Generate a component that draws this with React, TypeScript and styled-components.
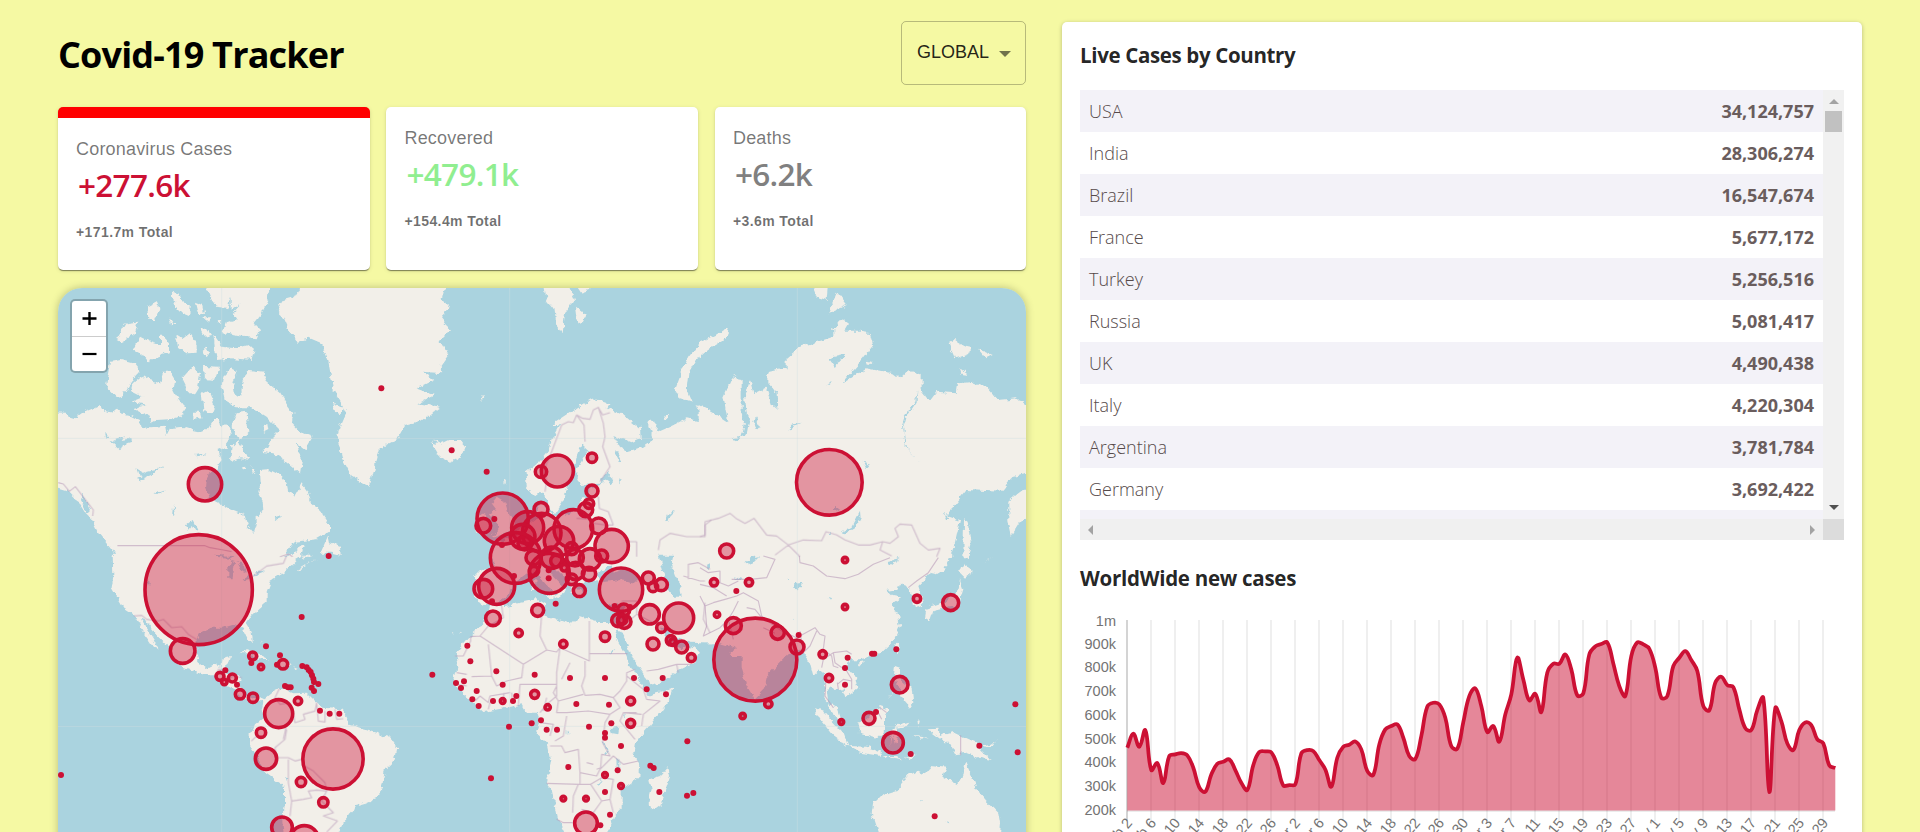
import React from "react";
import styled, { createGlobalStyle } from "styled-components";

const ui = '"Open Sans", "Noto Sans", sans-serif';
const arial = '"Liberation Sans", Arial, sans-serif';

const GlobalStyle = createGlobalStyle`
  * { box-sizing: border-box; }
  html, body { margin: 0; height: 832px; overflow: hidden; background: #f5f9a3; }
`;

const Page = styled.div`
  display: flex;
  gap: 36px;
  align-items: flex-start;
  padding: 21px 58px 0;
  height: 832px;
  overflow: hidden;
  font-family: ${ui};
`;

const Left = styled.main`
  width: 968px;
  flex: none;
`;

const Header = styled.header`
  display: flex;
  justify-content: space-between;
  align-items: flex-start;
  height: 86px;
`;

const Title = styled.h1`
  margin: 9px 0 0;
  font-size: 36px;
  line-height: 50px;
  font-weight: 700;
  letter-spacing: -0.83px;
  white-space: nowrap;
`;

const Select = styled.button`
  display: flex;
  align-items: flex-start;
  gap: 10px;
  width: 125px;
  height: 64px;
  padding: 20px 0 0 15px;
  border: 1px solid rgba(0, 0, 0, 0.25);
  border-radius: 5px;
  background: transparent;
  color: rgba(0, 0, 0, 0.87);
  font: 18px/20px ${arial};
`;

const Caret = styled.span`
  margin-top: 9px;
  border: 6px solid transparent;
  border-top-color: rgba(0, 0, 0, 0.54);
  border-bottom: 0;
`;

const Cards = styled.section`
  display: grid;
  grid-template-columns: 311.6px 311.6px 311px;
  column-gap: 16.9px;
`;

const Card = styled.article<{ $active?: boolean }>`
  height: 163px;
  padding: 21px 18px 0;
  border-top: ${(p) => (p.$active ? "11px solid red" : "0")};
  border-radius: 5px;
  background: #fff;
  box-shadow: 0 2px 1px -1px rgba(0, 0, 0, 0.3), 0 1px 1px rgba(0, 0, 0, 0.2), 0 1px 4px rgba(0, 0, 0, 0.12);
`;

const CardLabel = styled.div`
  font: 18px/20px ${arial};
  color: rgba(0, 0, 0, 0.54);
  letter-spacing: 0.19px;
`;

const CardNumber = styled.div<{ $color: string }>`
  margin-top: 4px;
  padding-left: 2px;
  font-size: 31.5px;
  line-height: 44px;
  font-weight: 600;
  letter-spacing: -0.7px;
  color: ${(p) => p.$color};
`;

const CardTotal = styled.div`
  margin-top: 16px;
  font: 700 14px/18px ${arial};
  letter-spacing: 0.4px;
  color: rgba(0, 0, 0, 0.56);
`;

const MapFrame = styled.section`
  position: relative;
  height: 600px;
  margin-top: 18px;
  border-radius: 24px;
  overflow: hidden;
  background: #aad3df;
`;

const MapShadow = styled.div`
  border-radius: 24px;
  box-shadow: 0 0 9px rgba(0, 0, 0, 0.24);
`;

const MapSvg = styled.svg`
  display: block;
  width: 968px;
  height: 600px;
`;

const ZoomControl = styled.div`
  position: absolute;
  left: 12px;
  top: 11px;
  width: 38px;
  height: 74px;
  border: 2px solid rgba(0, 0, 0, 0.22);
  border-radius: 5px;
  background-clip: padding-box;
  background-color: #fff;
`;

const ZoomButton = styled.button`
  display: flex;
  align-items: center;
  justify-content: center;
  width: 100%;
  height: 35px;
  padding: 0;
  border: 0;
  background: none;
  & + & {
    border-top: 1px solid #ccc;
  }
`;

const Panel = styled.aside`
  width: 800px;
  height: 900px;
  margin-top: 1px;
  padding: 18px;
  flex: none;
  border-radius: 5px;
  background: #fff;
  box-shadow: 0 1px 4px rgba(0, 0, 0, 0.25);
`;

const PanelHeading = styled.h3<{ $top?: number; $spacing?: number }>`
  margin: ${(p) => p.$top ?? 0}px 0 0;
  font-size: 20.5px;
  line-height: 30px;
  font-weight: 700;
  letter-spacing: ${(p) => p.$spacing ?? -0.35}px;
  color: rgba(0, 0, 0, 0.87);
`;

const TableBox = styled.div`
  display: grid;
  grid-template: 429px 21px / 743px 21px;
  margin-top: 20px;
`;

const Rows = styled.div`
  overflow: hidden;
`;

const Row = styled.div<{ $shaded: boolean }>`
  display: flex;
  justify-content: space-between;
  align-items: center;
  height: 42px;
  padding: 0 9px;
  font-size: 18px;
  letter-spacing: 0;
  color: #6a5d5d;
  background: ${(p) => (p.$shaded ? "#f3f2f8" : "#fff")};
  strong {
    font-weight: 700;
    font-size: 18px;
  }
`;

const Country = styled.span`
  font-weight: 300;
  color: #564a4a;
`;

const ScrollV = styled.div`
  display: flex;
  flex-direction: column;
  align-items: center;
  background: #f1f1f1;
`;

const ScrollH = styled.div`
  display: flex;
  align-items: center;
  justify-content: space-between;
  padding: 0 8px;
  background: #f0f0f0;
`;

const Corner = styled.div`
  background: #dcdcdc;
`;

const Thumb = styled.div`
  width: 17px;
  height: 21px;
  margin: 7px 0 auto;
  background: #c1c1c1;
`;

const Arrow = styled.i<{ $dir: "up" | "down" | "left" | "right" }>`
  border: 5px solid transparent;
  ${(p) =>
    ({
      up: "margin-top: 9px; border-top: 0; border-bottom-color: #a3a3a3;",
      down: "margin-bottom: 9px; border-bottom: 0; border-top-color: #505050;",
      left: "border-left: 0; border-right-color: #a3a3a3;",
      right: "border-right: 0; border-left-color: #a3a3a3;",
    })[p.$dir]}
`;

const ChartSvg = styled.svg`
  display: block;
  width: 764px;
  height: 240px;
  margin-top: 17px;
  text {
    font: 14.5px ${arial};
    fill: #737373;
  }
`;

const countries: [string, string][] = [
  ["USA", "34,124,757"],
  ["India", "28,306,274"],
  ["Brazil", "16,547,674"],
  ["France", "5,677,172"],
  ["Turkey", "5,256,516"],
  ["Russia", "5,081,417"],
  ["UK", "4,490,438"],
  ["Italy", "4,220,304"],
  ["Argentina", "3,781,784"],
  ["Germany", "3,692,422"],
  ["", ""],
];

type Marker = [number, number, number?, number?];

interface Tile {
  x: number;
  y: number;
  land: string;
  water?: string;
  borders?: string;
  markers: Marker[];
}

// Tile geometry is in thirds of a pixel; x and y are the tile's pixel origin.
const tiles: Tile[] = [
  {
    x: 50,
    y: 280,
    land: `M0 397L45 398 60 410 75 415 95 400 130 385 150 375 160 395 185 400 200 385 215 400 240 405 270 420 275 440 300 445 345 440 350 465 360 445 400 440 430 450 455 455 475 445 490 420 510 420 515 445 530 430 545 460 530 500 505 510 515 540 500 560 482 575 470 600 468 625 480 655 510 670 535 685 585 705 590 735 612 762 620 735 620 710 640 690 638 660 625 635 632 610 630 570 655 568 690 585 710 610 715 635 735 645 755 610 770 630 785 670 810 690 840 735 840 755 800 778 735 785 700 832L202 832 145 760 125 720 105 700 80 660 50 630 0 615Z
      M722 832L745 800 762 797 752 832ZM812 818L835 765 840 790 870 800 872 825 845 818Z
      M245 310L275 285 300 300 330 310 340 275 360 275 375 300 370 335 395 370 408 385 390 410 355 418 320 420 300 425 290 405 250 385 290 375 245 365 280 350 240 330Z
      M183 245L212 240 250 250 270 275 240 310 220 345 198 352 170 325Z
      M365 35L385 40 400 65 425 85 420 108 400 100 375 75ZM435 65L460 75 465 100 445 105ZM292 80L320 65 328 85 315 120 295 120ZM200 180L230 130 265 125 255 160 215 188ZM360 112L376 135 366 135Z
      M250 210L270 170 300 185 330 195 330 160 360 190 360 215 320 230 295 245 280 225ZM375 160L400 175 420 160 440 190 440 218 410 220 385 205ZM450 150L470 145 483 165 460 170ZM455 210L465 200 480 220 470 235ZM503 118L514 125 508 136ZM456 112L480 112 475 125Z
      M490 165L515 200 560 205 595 195 613 210 605 240 550 235 500 240Z
      M460 0L665 0 655 60 635 100 610 130 630 150 620 175 580 170 520 160 530 130 560 120 540 85 500 80 485 60Z
      M395 300L430 260 450 280 445 320 430 345 405 320ZM462 258L510 260 495 300 465 298ZM455 340L475 330 495 375 485 400 460 390ZM430 395L450 395 455 415 430 420Z
      M520 290L545 265 560 272 550 310 555 340 570 350 575 300 600 270 640 275 650 305 690 340 715 380 730 400 725 430 750 455 788 470 765 510 740 490 755 550 750 580 710 545 670 520 630 515 655 500 670 470 690 450 650 410 610 385 560 385 525 365 515 320Z
      M545 500L565 480 580 520 600 540 570 535 540 545ZM560 400L590 395 595 460 570 480 545 440ZM638 435L655 432 658 450 642 458ZM572 562L586 560 584 570ZM605 560L615 575 608 580Z
      M765 0L735 50 700 60 680 90 700 110 715 145 740 185 780 175 815 190 835 240 850 330 870 360 890 395 870 440 862 470 875 530 905 590 960 617 975 560 994 490 994 0ZM850 370L888 390 870 403 855 395Z`,
    water: `M185 485L225 465 215 480 245 475 245 488 222 495 215 512ZM258 598L290 575 315 570 340 555 310 582 270 600ZM310 640L345 627 325 642ZM408 735L428 720 445 752 435 755 425 738 415 752ZM535 85L545 50 545 90 575 70 548 100ZM370 675L374 700 366 705ZM262 565L285 580 270 588ZM165 455L178 470 170 475ZM95 640L120 690 110 700 90 660ZM430 525L470 520 440 535ZM672 712L690 705 680 720Z`,
    borders: `M24 608L40 612 58 634 76 620 130 690 128 708M202 797L465 797 480 803 520 810 545 815M690 830L715 822 728 830`,
    markers: [[465, 613, 50], [836, 828]],
  },
  {
    x: 380,
    y: 280,
    land: `M-4 0L200 0 185 60 210 80 180 110 210 150 180 180 205 225 180 260 190 280 125 275 160 300 110 325 165 345 112 370 180 380 130 420 75 435 50 480 -4 508Z
      M155 490L172 495 160 480 180 492 205 480 240 480 257 500 245 530 210 545 180 530 172 515Z
      M490 0L560 0 585 60 555 100 548 160 525 125 520 85 500 60ZM585 80L618 105 605 130 590 120ZM580 0L635 0 630 30 605 38Z
      M994 175L950 200 920 240 900 290 885 330 900 355 935 365 920 330 925 280 950 235 994 200Z
      M437 580L470 555 500 520 515 480 540 435 515 435 560 405 590 385 640 355 685 370 680 385 730 405 780 445 782 475 755 487 700 465 720 500 745 515 790 500 820 480 805 425 830 425 825 460 870 440 920 415 965 425 950 375 994 400 994 832 330 832 340 800 380 775 400 770 420 745 450 730 470 715 470 680 490 670 500 690 520 705 560 700 600 690 598 665 625 650 625 625 680 610 600 615 590 590 595 560 625 510 605 492 590 530 580 580 560 620 545 670 525 700 510 690 495 640 480 635 460 650 440 620Z
      M350 650L375 665 385 700 405 725 400 750 370 760 335 770 355 740 345 720 330 700 350 690 335 670ZM290 715L320 700 335 725 320 755 290 755ZM850 405L865 402 862 418 852 416ZM302 355L312 351 306 360ZM372 603L378 598 376 614Z`,
    water: `M678 585L700 600 695 612 680 600ZM715 590L728 600 722 610ZM660 600L685 575 690 590 665 612ZM855 725L865 700 885 692 868 710 862 728ZM710 510L725 540 718 550 706 525Z`,
    borders: `M495 635L500 600 492 570 515 515 545 435 565 425 580 428 590 405 608 415 630 418 640 390 655 382 668 405 690 398M590 405L612 435 615 485M655 382L670 430 675 470 668 500 690 560 660 605M655 650L658 685 685 695 700 735M770 785L770 830M835 810L840 780 870 760 920 770 975 770 975 735 994 720M740 785L770 785M640 730L680 735 700 735M590 715L635 718`,
    markers: [
      [4, 325], [215, 511], [320, 575], [532, 573, 48], [483, 575, 17], [636, 533, 14], [636, 633, 18], [627, 671, 14],
      [617, 689, 21], [483, 688, 21], [656, 738, 24], [368, 716, 77], [310, 737, 22], [343, 717], [580, 747, 58],
      [695, 798, 50], [443, 743, 48], [485, 758, 58], [428, 770, 37], [537, 783, 44], [575, 806, 18], [434, 790, 20], [366, 795],
    ],
  },
  {
    x: 700,
    y: 280,
    land: `M-4 190L50 165 80 145 90 158 70 180 10 215 -4 235Z
      M-4 375L40 400 85 430 70 350 95 295 125 300 125 400 135 430 125 470 95 475 105 482 140 465 150 415 140 400 135 350 150 300 160 340 200 320 220 380 232 390 230 340 205 310 205 275 260 265 260 235 300 200 370 180 400 170 400 150 425 115 445 130 430 155 480 155 510 160 520 195 490 235 420 315 500 265 580 280 600 295 625 270 665 285 665 330 690 362 710 335 770 340 775 310 820 305 860 320 895 360 950 355 1010 395 1010 575 940 590 905 635 800 630 760 680 735 705 780 720 765 790 750 832 -4 832Z
      M1010 600L955 640 925 665 925 720 935 765 960 725 1010 700ZM792 718L803 725 812 790 800 832 790 832Z
      M330 0L385 0 380 60 350 50ZM410 35L440 75 385 100ZM745 190L765 180 790 195 815 200 815 215 795 225 765 235ZM830 205L875 225 855 235ZM780 265L805 285 785 282ZM100 285L110 288 102 292ZM500 242L515 245 505 255Z`,
    water: `M480 692L482 715 465 745 440 760 425 758 455 740ZM385 235L430 225 438 230 410 245 405 262ZM165 415L182 445 172 448 160 425ZM268 435L305 428 280 440 266 452ZM488 545L508 555 498 568ZM390 758L396 765 390 775ZM728 705L748 712 740 722ZM400 305L385 318 379 315ZM405 680L418 690 405 695ZM652 330L650 365 620 410 612 440 622 510 660 545 618 505 609 440 617 405 646 362ZM210 205L216 210 212 216ZM345 142L354 147 347 151Z`,
    borders: `M0 770L15 765 15 725 55 715 90 700 108 715 135 730 162 715 200 765 230 768 265 795 300 830M225 825L265 795 310 780 365 782 378 755 410 765 435 780 475 795 510 795 548 785 570 790 595 770 585 745 600 732 635 735 660 790 685 810 720 805 710 830M548 785L540 810 575 828`,
    markers: [[388, 607, 98.5], [80, 813, 21]],
  },
  {
    x: 50,
    y: 556,
    land: `M188 -4L190 60 185 95 205 130 220 155 250 175 265 200 285 235 300 255 320 285 325 280 310 250 295 225 280 200 275 188 290 195 320 235 350 265 365 300 400 335 440 350 475 358 500 358 510 375 525 385 545 395 560 410 575 425 590 430 610 440 625 432 640 440 635 460 640 485 615 505 600 540 600 570 620 600 645 650 680 675 705 690 705 740 700 790 705 850 855 850 880 800 910 765 915 750 950 740 975 730 994 705 994 535 960 525 930 515 895 505 890 480 870 460 820 455 790 430 770 410 730 412 690 395 670 405 640 430 625 422 595 425 575 410 570 380 578 370 560 362 520 350 510 345 515 305 543 300 535 325 520 335 490 325 470 335 445 315 438 285 440 250 450 230 480 215 520 215 555 205 575 215 595 255 608 255 605 225 590 200 605 180 650 140 650 110 665 70 700 50 725 30 745 10 790 -4Z
      M740 42L775 20 802 12 770 25 745 46ZM568 292L590 285 630 298 660 312 635 312 600 292ZM675 322L700 312 722 325 700 335ZM732 332L746 332 740 336ZM620 330L645 335 635 340ZM628 252L635 265 632 262Z`,
    water: `M490 -4L550 0 540 8 505 6ZM535 70L535 35 545 12 555 15 548 70ZM560 15L585 30 590 50 575 45ZM578 68L600 55 608 65 585 72ZM608 52L640 40 640 47 615 58ZM290 72L300 80 294 86ZM738 12L765 -4 745 16ZM705 660L715 665 712 678Z`,
    borders: `M252 180L275 178 290 190 325 195 340 190 365 215 395 212 415 235 440 250M590 70L610 60 650 30 700 22 710 -2M498 358L505 340 520 340M530 372L550 360 575 365M688 398L675 425 690 445 720 440 730 470 735 500 765 490 760 475 795 465 800 440M800 440L805 495 825 498 825 465M855 460L860 490 880 488M710 520L705 550 675 575 680 605 715 605 735 615 755 610M604 555L620 540M715 610L715 680 725 735 760 730 785 725 775 705 800 702 830 705 825 680 790 645 755 625M725 735L720 780M830 705L815 735 850 770 820 780 862 795 830 828M700 550L708 515`,
    markers: [
      [446, 101, 161, 165], [398, 285, 37], [510, 361, 12], [523, 378, 8], [526, 343], [547, 366, 12], [561, 386],
      [570, 415, 14], [609, 425, 14], [608, 300, 12], [604, 321], [633, 333, 8], [648, 271], [690, 298], [681, 326],
      [699, 325, 14], [755, 183], [744, 435, 11], [686, 473, 42], [633, 530, 14], [648, 608, 32], [753, 678, 14],
      [820, 739, 14], [849, 609, 90.5], [696, 814, 31], [763, 852, 43], [810, 464], [839, 473], [868, 473], [33, 657],
      [757, 330], [770, 334], [776, 342], [782, 348], [786, 358], [790, 368], [792, 378], [785, 395], [792, 405],
      [805, 384], [705, 390], [714, 394], [722, 394],
    ],
  },
  {
    x: 380,
    y: 556,
    land: `M330 -4L345 20 340 40 300 45 285 60 285 130 315 145 350 140 390 115 400 80 430 60 450 45 475 55 500 85 530 110 525 125 535 120 555 105 550 90 520 60 500 30 515 25 540 50 565 75 575 110 600 130 605 110 590 95 620 75 650 70 660 90 660 130 690 145 735 145 735 170 720 200 714 215 740 260 760 310 795 360 805 388 840 380 880 350 930 325 960 290 945 275 925 265 905 280 885 270 865 250 840 215 850 215 885 245 930 260 994 262 994 -4Z
      M330 148L375 150 470 130 495 145 480 175 520 185 575 205 600 180 650 195 700 195 715 215 705 240 740 300 745 320 765 355 800 405 800 420 880 398 870 430 840 470 790 530 765 560 760 590 778 620 775 665 725 700 725 755 700 780 690 810 665 850 565 850 530 780 515 700 500 680 515 620 505 570 470 530 480 500 470 470 440 470 425 445 380 455 310 468 270 430 235 400 220 370 235 310 228 290 270 240 300 215 325 165Z
      M865 630L870 660 840 750 820 765 805 740 815 700 808 670 840 660ZM-4 538L30 545 52 575 45 610 15 640 5 700 -4 712ZM455 75L467 72 465 100 455 98ZM500 118L528 115 522 130ZM215 228L222 232 216 232ZM238 232L246 226 242 234Z`,
    water: `M835 -4L880 -4 875 25 888 60 900 80 905 125 880 125 862 95 850 50ZM650 55L665 38 695 28 700 50 740 35 790 65 770 80 720 72 670 78ZM692 515L715 512 712 535 695 532ZM668 555L672 555 684 590 678 595ZM712 605L718 608 718 640 713 635ZM980 30L990 25 990 40ZM735 470L738 488 733 482ZM560 525L566 535 560 535ZM690 290L705 280 692 294ZM650 685L665 670 655 686Z`,
    borders: `M300 240L272 242 272 255 250 300 225 300M300 240L325 210 370 185 365 150M300 240L430 325 500 282 530 288 540 275 628 315 628 195M500 282L480 240 485 175M325 265L335 360 275 362M335 360L350 390 380 375 425 365 430 325M628 293L742 293M540 275L530 350 530 385 420 385 415 450M615 315L615 360 605 390 615 418 660 415 700 425 720 405 740 375 740 350 765 340M530 385L530 420 500 445 480 470M530 390L520 410 535 435 610 415M535 435L530 470 560 470 625 465 690 475 720 455 700 425M740 360L790 400 800 430 840 435 790 475 785 510M770 470L735 470M785 475L730 470 720 495 765 550M690 475L675 500 668 560 690 600 665 595 662 635 650 640M510 570L545 570 555 590 595 580 600 650 650 660 660 640 700 600 730 625 775 615M480 500L520 505 510 540M600 650L600 685 500 682M595 685L580 720 578 770M600 685L632 685 665 735 640 770 605 760M632 685L665 665 700 670 690 730 665 735M578 800L550 800 530 790M690 730L700 770M525 555L550 540 560 480M725 215L770 175 770 135 725 135M770 175L820 200M800 345L835 340 890 325 895 350M930 325L890 325M925 70L925 25 955 20 990 40M910 60L960 75 975 75M975 140L970 190 990 230M260 355L230 350M230 385L260 390M285 435L300 420 325 440 330 420 360 415 390 410M330 440L325 460M370 440L372 410M395 410L398 440M545 370L570 320M500 425L490 465M620 620L640 625`,
    markers: [
      [407, 6, 76], [350, 91, 54], [310, 98, 28], [508, 52, 60], [402, 60], [506, 43], [506, 67], [587, 45, 26],
      [627, 54, 20], [598, 104, 18], [575, 70, 16], [630, 10, 32], [460, 5, 22], [515, 5, 32], [530, 15, 18],
      [553, 35, 10], [585, 5, 25], [462, 45, 14], [665, 0, 18], [336, 136], [723, 101, 65], [704, 150], [731, 162, 18],
      [714, 193, 19], [733, 197, 20], [727, 190, 14], [750, 153], [805, 66, 18], [819, 93, 14], [844, 86, 18],
      [809, 175, 29], [896, 186, 45], [844, 215, 14], [873, 253, 14], [879, 258, 10], [905, 273, 18], [934, 305, 12],
      [819, 264, 18], [339, 187, 22], [473, 163, 18], [527, 143], [416, 231, 11], [550, 264, 11], [675, 242, 14],
      [262, 269], [271, 316], [349, 346], [157, 356], [228, 381], [252, 376], [243, 396], [290, 405], [277, 430],
      [296, 450], [339, 435], [368, 386], [368, 435, 7], [399, 435], [409, 420], [464, 356], [464, 415, 12],
      [503, 454, 8], [570, 366], [675, 366], [762, 366], [848, 366], [800, 400], [858, 415], [752, 435, 12], [687, 446],
      [589, 444], [752, 502, 12], [694, 502], [483, 493], [455, 502], [387, 512], [500, 521], [531, 521], [627, 512],
      [675, 531], [675, 545], [723, 570], [565, 633], [675, 657, 7], [713, 643], [723, 690, 7], [675, 708], [690, 776],
      [618, 728, 7], [550, 728, 7], [618, 802, 34], [661, 808], [333, 667], [838, 708], [811, 629], [821, 636],
      [922, 556], [921, 719], [940, 711],
    ],
  },
  {
    x: 700,
    y: 556,
    land: `M-4 -4L755 -4 735 40 710 55 690 50 670 75 655 90 665 120 670 150 645 155 635 120 630 95 600 85 595 100 560 105 575 120 605 125 575 145 595 180 600 210 580 255 545 290 500 305 480 310 450 310 440 330 470 370 475 395 440 425 430 400 400 405 390 390 380 400 385 440 410 455 425 500 400 480 385 440 370 425 378 370 360 340 340 360 330 320 310 290 290 275 260 300 200 360 195 400 165 430 140 390 125 340 125 300 90 300 85 290 110 275 60 262 -4 262Z
      M342 456L375 470 430 530 445 572 400 540 360 490ZM445 570L500 572 545 590 545 600 480 590ZM475 500L500 490 540 450 570 460 555 480 555 520 530 545 480 530ZM572 570L575 520 590 508 628 500 620 510 590 515 592 535 585 565 578 540ZM585 330L600 335 600 365 635 395 640 440 630 455 612 435 600 400 582 360ZM560 430L580 405 575 415Z
      M683 520L715 518 720 540 760 528 830 560 845 585 875 612 840 605 800 590 765 595 750 565 725 550ZM845 570L880 560 890 548 880 568 855 575ZM652 490L660 495 655 515ZM640 540L690 545 660 548ZM550 600L590 600 610 610 560 604ZM618 605L650 595 625 612Z
      M520 740L540 720 590 705 625 660 650 645 670 655 690 630 740 635 730 660 775 685 785 665 795 615 815 660 830 700 860 735 895 770 900 800 895 850 540 850 515 770Z
      M790 22L822 45 795 65 780 50ZM780 70L790 100 775 150 740 155 700 165 690 195 675 185 680 155 740 135 770 110ZM470 320L492 316 480 332ZM592 260L598 270 590 292 583 278ZM880 0L850 22 862 12ZM198 425L212 430 212 450 200 448Z`,
    water: `M135 20L150 5 180 0 165 15 140 25ZM282 85L305 80 302 97 284 96ZM384 126L394 128 390 134ZM105 72L120 60 130 72ZM660 732L667 734 662 736ZM740 795L750 798 744 802ZM262 65L268 67 264 70ZM280 185L285 190 280 192ZM560 18L600 8 570 26Z`,
    borders: `M298 0L300 20 340 30 380 60 435 68 475 55 520 25 570 5M715 5L685 50 650 75 625 95M190 0L225 10 200 65 150 70 95 70M0 35L25 50 60 45 60 80 85 90 115 75M0 120L15 150 40 140 75 130 110 120 130 110 175 135 185 180 210 200 245 225 290 245 345 215 360 235 375 240 370 280M15 150L20 210 10 240 60 215 85 190 100 165 115 135M140 155L165 160 185 185M85 190L100 250M300 225L310 290 330 270 350 225M370 280L395 300 400 330 415 335M365 335L370 310 400 290 440 285 455 295M400 290L405 320 440 345 455 370 455 400M412 385L430 370 455 375M378 370L375 420 400 455M415 400L412 380M535 470L545 490M540 455L560 470M782 538L782 598M190 215L225 232M0 85L40 95 80 120`,
    markers: [
      [435, 12, 8], [147, 79, 11], [42, 79, 11], [109, 105], [51, 176, 8], [435, 153, 8], [651, 128, 11], [752, 140, 24],
      [100, 209, 24], [233, 230, 20], [296, 237], [291, 273, 21], [166, 311, 124.5], [205, 444, 11], [128, 480, 8],
      [368, 295, 11], [387, 366, 11], [443, 305], [435, 336], [435, 386], [516, 293], [523, 293], [589, 280],
      [599, 386, 25], [507, 487, 18], [528, 468], [424, 498, 7], [579, 560, 31], [632, 594], [838, 569], [946, 445],
      [953, 589], [704, 781],
    ],
  },
];

const at = (t: Tile) => `translate(${t.x} ${t.y}) scale(0.33333)`;

function MapMarker({ marker: [x, y, rx, ry = rx] }: { marker: Marker }) {
  if (rx === undefined) {
    return <circle cx={x} cy={y} r="9" fillOpacity="1" stroke="none" />;
  }
  return <ellipse cx={x} cy={y} rx={rx} ry={ry} />;
}

function WorldMap() {
  return (
    <MapSvg viewBox="58 288 968 600">
      <defs>
        <filter id="coast" filterUnits="userSpaceOnUse" x="40" y="270" width="1010" height="620">
          <feTurbulence type="fractalNoise" baseFrequency="0.15" numOctaves="3" seed="4" />
          <feDisplacementMap in="SourceGraphic" scale="6.5" xChannelSelector="R" yChannelSelector="G" />
        </filter>
      </defs>
      <g filter="url(#coast)">
        {tiles.map((t, i) => (
          <path key={i} d={t.land} transform={at(t)} fill="#f2efe9" />
        ))}
        {tiles.map((t, i) => (
          <path key={i} d={t.water} transform={at(t)} fill="#aad3df" />
        ))}
      </g>
      {tiles.map((t, i) => (
        <path key={i} d={t.borders} transform={at(t)} fill="none" stroke="#b99bb9" strokeOpacity=".6" strokeWidth="3.4" strokeLinejoin="round" />
      ))}
      <path d="M221.7 288V888M509.7 288V888M797.3 288V888M58 438.4H1026M58 726.4H1026" stroke="#cfdfe2" strokeOpacity=".4" fill="none" />
      {tiles.map((t, i) => (
        <g key={i} transform={at(t)} fill="#cc1034" fillOpacity=".4" stroke="#cc1034" strokeWidth="10.8">
          {t.markers.map((m, j) => (
            <MapMarker key={j} marker={m} />
          ))}
        </g>
      ))}
    </MapSvg>
  );
}

// Daily plot heights in thirds of a pixel; 931 is the 200k line.
const series = [
  745, 703, 742, 692, 812, 791, 851, 770, 765, 761, 768, 805, 864, 877, 825, 793, 787, 780, 812, 850, 872, 797, 758, 756,
  759, 798, 858, 857, 855, 762, 752, 755, 782, 810, 862, 775, 742, 736, 726, 750, 815, 827, 735, 690, 680, 675, 715, 770,
  779, 710, 622, 610, 615, 655, 740, 748, 668, 590, 567, 620, 698, 680, 727, 645, 585, 475, 540, 603, 583, 638, 520, 493,
  493, 465, 510, 588, 582, 465, 441, 434, 429, 492, 560, 590, 470, 429, 435, 448, 505, 595, 590, 500, 475, 455, 482, 515,
  620, 633, 550, 532, 557, 563, 630, 686, 692, 632, 595, 878, 626, 665, 732, 752, 692, 669, 677, 720, 732, 798, 806,
];
const points = series.map((v, i) => ({ x: 47.3 + i * 6, y: v / 3 - 110.6 }));

function spline(pts: { x: number; y: number }[]) {
  const t = 0.4;
  const cps = pts.map((p, i) => {
    const a = pts[i - 1] ?? p;
    const b = pts[i + 1] ?? p;
    const d0 = Math.hypot(p.x - a.x, p.y - a.y);
    const d1 = Math.hypot(b.x - p.x, b.y - p.y);
    const fa = (t * d0) / (d0 + d1);
    const fb = (t * d1) / (d0 + d1);
    return {
      px: p.x - fa * (b.x - a.x),
      py: p.y - fa * (b.y - a.y),
      nx: p.x + fb * (b.x - a.x),
      ny: p.y + fb * (b.y - a.y),
    };
  });
  return pts
    .map((p, i) =>
      i === 0 ? `M${p.x} ${p.y}` : `C${cps[i - 1].nx} ${cps[i - 1].ny} ${cps[i].px} ${cps[i].py} ${p.x} ${p.y}`
    )
    .join("");
}

const curve = spline(points);
const dates = [
  ...[2, 6, 10, 14, 18, 22, 26].map((d) => `Feb ${d}`),
  ...[2, 6, 10, 14, 18, 22, 26, 30].map((d) => `Mar ${d}`),
  ...[3, 7, 11, 15, 19, 23, 27].map((d) => `Apr ${d}`),
  ...[1, 5, 9, 13, 17, 21, 25, 29].map((d) => `May ${d}`),
];
const scale = ["1m", "900k", "800k", "700k", "600k", "500k", "400k", "300k", "200k"];

function CasesChart() {
  const base = 200.5;
  return (
    <ChartSvg viewBox="0 0 764 240">
      {dates.map((d, i) => (
        <line key={d} x1={47 + i * 24} x2={47 + i * 24} y1="10" y2="211" stroke={i ? "rgba(0,0,0,.1)" : "rgba(0,0,0,.27)"} strokeWidth="1.25" />
      ))}
      <line x1="47" x2="755" y1={base + 0.5} y2={base + 0.5} stroke="rgba(0,0,0,.15)" />
      <path d={`${curve}L755.3 ${base}L47.3 ${base}Z`} fill="rgba(204,16,52,.5)" />
      <path d={curve} fill="none" stroke="#cc1034" strokeWidth="3.75" strokeLinejoin="round" />
      {scale.map((s, i) => (
        <text key={s} x="36" y={(i ? 14.8 : 15.5) + i * 23.75} textAnchor="end">
          {s}
        </text>
      ))}
      {dates.map((d, i) => (
        <text key={d} transform={`translate(${49 + i * 24} 210) rotate(-50)`} textAnchor="end" y="5">
          {d}
        </text>
      ))}
    </ChartSvg>
  );
}

const stats = [
  { label: "Coronavirus Cases", value: "+277.6k", total: "+171.7m Total", color: "#cc1034", active: true },
  { label: "Recovered", value: "+479.1k", total: "+154.4m Total", color: "lightgreen" },
  { label: "Deaths", value: "+6.2k", total: "+3.6m Total", color: "gray" },
];

export default function App() {
  return (
    <Page>
      <GlobalStyle />
      <Left>
        <Header>
          <Title>Covid-19 Tracker</Title>
          <Select>
            GLOBAL <Caret />
          </Select>
        </Header>
        <Cards>
          {stats.map((s) => (
            <Card key={s.label} $active={s.active}>
              <CardLabel>{s.label}</CardLabel>
              <CardNumber $color={s.color}>{s.value}</CardNumber>
              <CardTotal>{s.total}</CardTotal>
            </Card>
          ))}
        </Cards>
        <MapShadow>
          <MapFrame>
            <WorldMap />
            <ZoomControl>
              <ZoomButton aria-label="Zoom in">
                <svg width="15" height="15" viewBox="0 0 15 15">
                  <path d="M7.5 1V14M.5 7.5H14.5" stroke="#000" strokeWidth="2.4" />
                </svg>
              </ZoomButton>
              <ZoomButton aria-label="Zoom out">
                <svg width="15" height="15" viewBox="0 0 15 15">
                  <path d="M.5 7H14.5" stroke="#000" strokeWidth="2.2" />
                </svg>
              </ZoomButton>
            </ZoomControl>
          </MapFrame>
        </MapShadow>
      </Left>
      <Panel>
        <PanelHeading>Live Cases by Country</PanelHeading>
        <TableBox>
          <Rows>
            {countries.map(([name, cases], i) => (
              <Row key={i} $shaded={i % 2 === 0}>
                <Country>{name}</Country>
                <strong>{cases}</strong>
              </Row>
            ))}
          </Rows>
          <ScrollV>
            <Arrow $dir="up" />
            <Thumb />
            <Arrow $dir="down" />
          </ScrollV>
          <ScrollH>
            <Arrow $dir="left" />
            <Arrow $dir="right" />
          </ScrollH>
          <Corner />
        </TableBox>
        <PanelHeading $top={23} $spacing={-0.28}>
          WorldWide new cases
        </PanelHeading>
        <CasesChart />
      </Panel>
    </Page>
  );
}
